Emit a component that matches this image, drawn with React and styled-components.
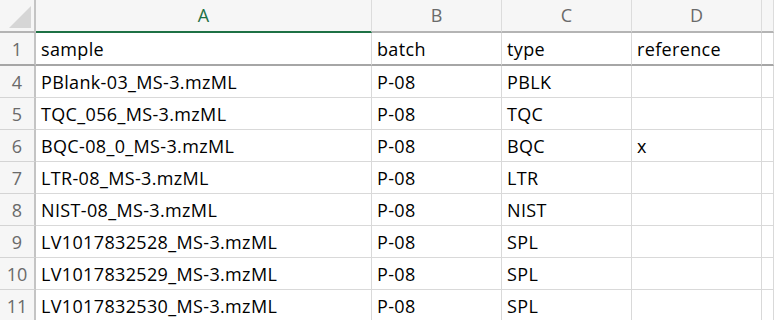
import React from "react";
import styled, { createGlobalStyle } from "styled-components";

const Global = createGlobalStyle`
  html, body { margin: 0; padding: 0; background: #ffffff; }
  body { font-family: "Open Sans", Roboto, "Liberation Sans", sans-serif; overflow: hidden; }
`;

const COLS = "36px 336px 130px 130px 130px 1fr";

const Sheet = styled.div`
  width: 774px;
  height: 320px;
  overflow: hidden;
  background: #fff;
`;

const Row = styled.div`
  display: grid;
  grid-template-columns: ${COLS};
  height: ${(p) => p.$h}px;
`;

const Corner = styled.div`
  position: relative;
  background: #f6f6f6;
  border-right: 2px solid #c4c4c4;
  border-bottom: 2px solid #b4b4b4;
  box-sizing: border-box;
  svg { position: absolute; right: 3px; bottom: 3px; }
`;

const ColHead = styled.div`
  background: #f6f6f6;
  border-right: 1px solid #dcdcdc;
  border-bottom: 2px solid ${(p) => (p.$active ? "#1e7145" : "#b4b4b4")};
  box-sizing: border-box;
  display: flex;
  align-items: center;
  justify-content: center;
  font-size: 18px;
  color: ${(p) => (p.$active ? "#1e7145" : "#6a6a6a")};
  padding-bottom: 2px;
`;

const RowHead = styled.div`
  background: #f6f6f6;
  border-right: 2px solid #c4c4c4;
  border-bottom: ${(p) => (p.$hidden ? "2px solid #a6a6a6" : "1px solid #d4d4d4")};
  box-sizing: border-box;
  display: flex;
  align-items: center;
  justify-content: center;
  font-size: 18px;
  color: #6a6a6a;
`;

const Cell = styled.div`
  border-right: 1px solid #d9d9d9;
  border-bottom: ${(p) => (p.$hidden ? "2px solid #a6a6a6" : "1px solid #d9d9d9")};
  box-sizing: border-box;
  display: flex;
  align-items: center;
  padding-left: 5px;
  font-size: 18px;
  font-weight: 500;
  letter-spacing: 0.35px;
  color: #000;
  white-space: nowrap;
  overflow: hidden;
`;

const data = [
  ["1", "sample", "batch", "type", "reference"],
  ["4", "PBlank-03_MS-3.mzML", "P-08", "PBLK", ""],
  ["5", "TQC_056_MS-3.mzML", "P-08", "TQC", ""],
  ["6", "BQC-08_0_MS-3.mzML", "P-08", "BQC", "x"],
  ["7", "LTR-08_MS-3.mzML", "P-08", "LTR", ""],
  ["8", "NIST-08_MS-3.mzML", "P-08", "NIST", ""],
  ["9", "LV1017832528_MS-3.mzML", "P-08", "SPL", ""],
  ["10", "LV1017832529_MS-3.mzML", "P-08", "SPL", ""],
  ["11", "LV1017832530_MS-3.mzML", "P-08", "SPL", ""],
];

export default function App() {
  return (
    <Sheet>
      <Global />
      <Row $h={33}>
        <Corner>
          <svg width="22" height="22" viewBox="0 0 22 22">
            <polygon points="22,0 22,22 0,22" fill="#d6d6d6" />
          </svg>
        </Corner>
        <ColHead $active>A</ColHead>
        <ColHead>B</ColHead>
        <ColHead>C</ColHead>
        <ColHead>D</ColHead>
        <ColHead />
      </Row>
      {data.map((r, i) => {
        const hidden = i === 0;
        return (
          <Row key={r[0]} $h={hidden ? 33 : 32}>
            <RowHead $hidden={hidden}>{r[0]}</RowHead>
            {r.slice(1).map((c, j) => (
              <Cell key={j} $hidden={hidden}>{c}</Cell>
            ))}
            <Cell $hidden={hidden} />
          </Row>
        );
      })}
    </Sheet>
  );
}
